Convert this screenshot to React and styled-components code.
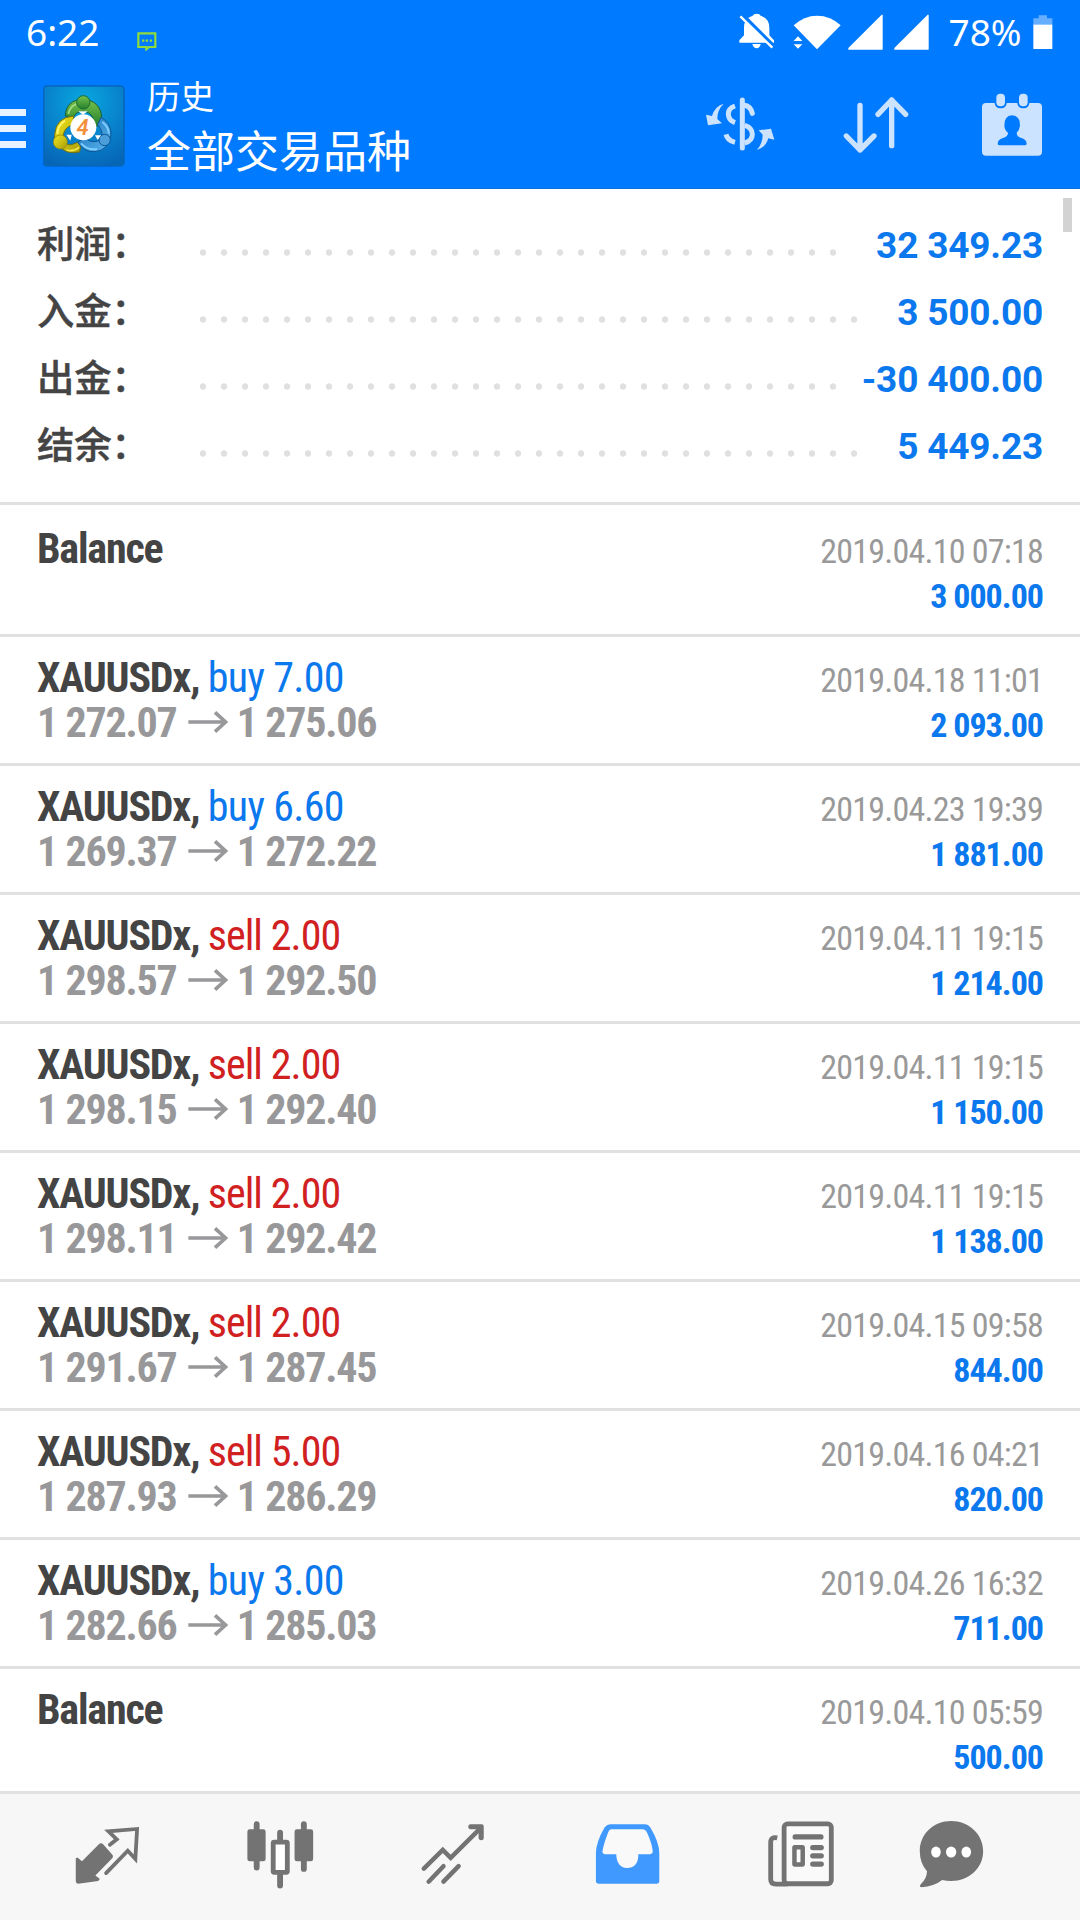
import React from 'react'
import styled, { createGlobalStyle } from 'styled-components'

const GlobalStyle = createGlobalStyle`
    body {
        margin: 0;
        background: #fff;
    }
    * {
        box-sizing: border-box;
    }
    svg {
        display: block;
        flex: none;
    }
`;

const Screen = styled.div`
    width: 1080px;
    height: 1920px;
    display: flex;
    flex-direction: column;
    overflow: hidden;
    background: #fff;
    font-family: Roboto, "Noto Sans CJK SC", sans-serif;
    color: #444;
`;

const Header = styled.header`
    height: 189px;
    flex: none;
    background: #007aff;
    border-bottom: 1px solid #0a6edc;
    color: #fff;
`;

const StatusBar = styled.div`
    height: 66px;
    display: flex;
    align-items: center;
    padding: 0 27px 2px 26px;
    font-family: "Noto Sans", sans-serif;
    font-size: 37px;
    line-height: 50px;
`;

const Clock = styled.span`
    width: 111px;
`;

const StatusIcons = styled.div`
    margin-left: auto;
    display: flex;
    align-items: center;
`;

const StatusIcon = styled.svg`
    height: 38px;
    width: ${props => props.$w}px;
    margin-right: ${props => props.$gap || 0}px;
`;

const Battery = styled.span`
    width: 84.5px;
    white-space: nowrap;
`;

const AppBar = styled.div`
    height: 122px;
    display: flex;
    align-items: center;
    padding-right: 33px;
`;

const MenuButton = styled.div`
    width: 26px;
    margin-right: 17px;
    padding-top: 2px;
    display: flex;
    flex-direction: column;
    gap: 9px;
`;

const MenuLine = styled.i`
    height: 7px;
    background: #e6f2ff;
`;

const Titles = styled.div`
    margin: -5px 0 0 22px;
    font-family: "Noto Sans CJK SC", sans-serif;
    font-weight: 400;
`;

const Title = styled.div`
    font-size: 33.5px;
    line-height: 49px;
`;

const Subtitle = styled.div`
    font-size: 44px;
    line-height: 60px;
`;

const Actions = styled.div`
    margin: -6px 0 0 auto;
    display: flex;
    gap: 66px;
    color: #cce3ff;
`;

const Content = styled.main`
    position: relative;
    flex: 1;
    overflow: hidden;
`;

const ScrollThumb = styled.div`
    position: absolute;
    top: 9px;
    right: 8px;
    width: 9px;
    height: 34px;
    background: #d3d3d3;
`;

const Summary = styled.div`
    height: 313px;
    padding: 21px 37px 0;
`;

const SummaryRow = styled.div`
    height: 67px;
    display: flex;
    align-items: center;
`;

const SummaryLabel = styled.span`
    width: 163px;
    padding-bottom: 3px;
    font-family: "Noto Sans CJK SC", sans-serif;
    font-size: 37.3px;
    font-weight: 500;
    line-height: 62px;
    -webkit-text-stroke: 0.45px #444;
`;

const Dots = styled.span`
    flex: 1;
    height: 7px;
    margin: 18px 25px 0 0;
    background: radial-gradient(circle at 3px 3.5px, #e0e0e0 2.8px, transparent 3.6px) 0 0 / 21px 7px;
`;

const SummaryValue = styled.span`
    font-size: 37px;
    font-weight: 700;
    line-height: 67px;
    letter-spacing: -0.18px;
    padding-top: 3px;
    color: #0b78ee;
`;

const Deal = styled.div`
    height: ${props => props.$first ? 132 : 129}px;
    border-top: 3px solid #e1e1e1;
    padding: ${props => props.$first ? 21 : 18}px 37px 0;
    display: flex;
    justify-content: space-between;
    font-family: "Roboto Condensed", Roboto, sans-serif;
    font-stretch: 75%;
`;

const DealInfo = styled.div`
    font-size: 42px;
    line-height: 45px;
    letter-spacing: -1.2px;
    white-space: nowrap;
`;

const Symbol = styled.div`
    font-weight: 700;
`;

const Side = styled.span`
    font-weight: 400;
    letter-spacing: ${props => props.$side === 'buy' ? -0.65 : -0.95}px;
    color: ${props => props.$side === 'buy' ? '#0b78ee' : '#d0201f'};
`;

const Prices = styled.div`
    display: flex;
    align-items: center;
    font-weight: 700;
    color: #98989a;
`;

const PriceArrow = styled.svg`
    width: 40px;
    height: 22px;
    margin: -1px 9px 0 11px;
`;

const DealResult = styled.div`
    text-align: right;
    font-size: 34px;
    line-height: 45px;
    padding: 3px 0 0 0;
    white-space: nowrap;
`;

const DealTime = styled.div`
    letter-spacing: -0.77px;
    color: #999;
`;

const Profit = styled.div`
    font-weight: 700;
    letter-spacing: -1px;
    color: #0b78ee;
`;

const TabBar = styled.nav`
    height: 129px;
    flex: none;
    display: flex;
    align-items: center;
    padding: 0 0 5px 20.75px;
    border-top: 3px solid #e1e1e1;
    background: #f7f7f7;
`;

const Tab = styled.div`
    width: ${props => props.$narrow ? 125 : 173.5}px;
    display: flex;
    justify-content: center;
    color: ${props => props.$active ? '#4099ff' : '#737373'};
`;

const totals = [
    { label: '利润：', value: '32 349.23' },
    { label: '入金：', value: '3 500.00' },
    { label: '出金：', value: '-30 400.00' },
    { label: '结余：', value: '5 449.23' },
];

const deals = [
    { time: '2019.04.10 07:18', profit: '3 000.00' },
    { side: 'buy', volume: '7.00', open: '1 272.07', close: '1 275.06', time: '2019.04.18 11:01', profit: '2 093.00' },
    { side: 'buy', volume: '6.60', open: '1 269.37', close: '1 272.22', time: '2019.04.23 19:39', profit: '1 881.00' },
    { side: 'sell', volume: '2.00', open: '1 298.57', close: '1 292.50', time: '2019.04.11 19:15', profit: '1 214.00' },
    { side: 'sell', volume: '2.00', open: '1 298.15', close: '1 292.40', time: '2019.04.11 19:15', profit: '1 150.00' },
    { side: 'sell', volume: '2.00', open: '1 298.11', close: '1 292.42', time: '2019.04.11 19:15', profit: '1 138.00' },
    { side: 'sell', volume: '2.00', open: '1 291.67', close: '1 287.45', time: '2019.04.15 09:58', profit: '844.00' },
    { side: 'sell', volume: '5.00', open: '1 287.93', close: '1 286.29', time: '2019.04.16 04:21', profit: '820.00' },
    { side: 'buy', volume: '3.00', open: '1 282.66', close: '1 285.03', time: '2019.04.26 16:32', profit: '711.00' },
    { time: '2019.04.10 05:59', profit: '500.00' },
];

const MessageSvg = styled.svg`
    width: 20px;
    height: 19px;
    margin-top: 18px;
`;

const MessageIcon = () => (
    <MessageSvg viewBox="0 0 60 57" fill="none" stroke="#8fdc3c" strokeWidth="6.5">
        <path d="M4 4H55V45H36L28 52V45H4Z" />
        <path d="M15 26h7M26 26h7M38 26h7" strokeWidth="7" />
    </MessageSvg>
)

const BellOffIcon = () => (
    <StatusIcon $w={36} $gap={18} viewBox="175 36 108 114" fill="#fff">
        <path d="M176 125V118L190 103V80Q190 52 216 44Q218 38 228 38Q238 38 240 44Q266 52 266 80V103L280 118V125Z" />
        <path d="M215 129h25q-3 13-12 13t-13-13z" />
        <path d="M180 38L282 140" stroke="#007aff" strokeWidth="14" />
        <path d="M179 46L275 140" stroke="#fff" strokeWidth="7" />
    </StatusIcon>
)

const WifiIcon = () => (
    <StatusIcon $w={48} $gap={7} viewBox="337 36 144 114" fill="#fff">
        <path d="M339 73Q370 44 409 44Q450 44 480 73L409 145Z" />
        <path d="M335 118L352 97L370 118V130L352 152L335 130Z" fill="#007aff" />
        <path d="M339 120L352 106L365 120ZM339 130H365L352 143Z" />
    </StatusIcon>
)

const SignalIcon = ({ gap }) => (
    <StatusIcon $w={35} $gap={gap} viewBox="501 36 105 114" fill="#fff">
        <path d="M502 146V141L602 41H605V146Z" />
    </StatusIcon>
)

const BatteryIcon = () => (
    <StatusIcon $w={20} viewBox="1058 36 60 114">
        <path d="M1059 72V52H1075V43H1100V52H1116V72Z" fill="#66aeff" />
        <path d="M1059 71H1116V144H1059Z" fill="#fff" />
    </StatusIcon>
)

const LogoSvg = styled.svg`
    width: 82px;
    height: 82px;
    margin-top: -3px;
`;

const Logo = () => (
    <LogoSvg viewBox="130 253 246 246">
        <defs>
            <radialGradient id="sky" cx="0.5" cy="0.2" r="0.85">
                <stop offset="0" stopColor="#08a8e0" />
                <stop offset="0.6" stopColor="#087fca" />
                <stop offset="1" stopColor="#0666b6" />
            </radialGradient>
            <linearGradient id="green" x1="0" y1="0" x2="0" y2="1">
                <stop offset="0" stopColor="#78c24c" />
                <stop offset="1" stopColor="#23802c" />
            </linearGradient>
            <linearGradient id="yellow" x1="0" y1="0" x2="1" y2="1">
                <stop offset="0" stopColor="#f1e51b" />
                <stop offset="1" stopColor="#a89c0c" />
            </linearGradient>
            <linearGradient id="blue" x1="0" y1="0" x2="1" y2="1">
                <stop offset="0" stopColor="#1670b5" />
                <stop offset="1" stopColor="#5cb6f0" />
            </linearGradient>
        </defs>
        <rect x="132" y="256" width="241" height="240" rx="10" fill="url(#sky)" stroke="#0766bd" strokeWidth="5" />
        <path d="M197 346C197 315 218 296 250 296C284 296 306 320 306 352L296 376H272L280 352Q270 332 250 332Q230 332 222 348Z" fill="url(#green)" stroke="#1b5f35" strokeWidth="3" />
        <path d="M206 340Q210 318 230 310" fill="none" stroke="#a8dc86" strokeWidth="5" />
        <circle cx="251" cy="305" r="20" fill="url(#green)" stroke="#1b6a35" strokeWidth="3" />
        <path d="M222 346Q168 350 165 402Q164 422 176 434Q198 463 240 454L246 420L216 432Q196 436 190 412Q190 380 220 372Z" fill="url(#yellow)" stroke="#6f700f" strokeWidth="3" />
        <path d="M196 360Q174 374 173 400" fill="none" stroke="#fff56a" strokeWidth="6" />
        <path d="M200 448Q222 454 238 440" fill="none" stroke="#f3e84a" strokeWidth="5" />
        <circle cx="182" cy="424" r="21" fill="url(#yellow)" stroke="#8a850f" strokeWidth="2" />
        <path d="M304 350Q334 366 334 402Q326 450 286 453Q252 455 234 424L256 412Q280 432 304 416Q314 396 294 372Z" fill="url(#blue)" stroke="#0a5597" strokeWidth="3" />
        <path d="M244 428Q264 450 292 445M308 364Q326 378 328 398" fill="none" stroke="#7dccff" strokeWidth="6" />
        <circle cx="315" cy="418" r="17" fill="#4b9ed8" stroke="#0a5597" strokeWidth="3" />
        <path d="M200 402h16l-4 18zM286 404h18l-10 14zM236 332l14 10 14-10z" fill="#fff" />
        <circle cx="251" cy="380" r="39" fill="#fff" />
        <text x="249" y="404" textAnchor="middle" fontFamily="Roboto, sans-serif" fontSize="66" fontStyle="italic" fontWeight="600" fill="#f2903c">4</text>
    </LogoSvg>
)

const CurrencyIcon = () => (
    <svg width="70" height="70" viewBox="75 268 210 210" fill="none" stroke="currentColor">
        <path d="M187 301V445" strokeWidth="15" strokeLinecap="round" />
        <path d="M165 319Q144 326 145 344Q146 362 165 369" strokeWidth="15" />
        <path d="M194 317Q212 320 217 341" strokeWidth="15" strokeLinecap="round" />
        <path d="M194 377Q217 384 217 404Q217 424 194 430" strokeWidth="15" />
        <path d="M138 404Q142 422 165 428" strokeWidth="15" strokeLinecap="butt" />
        <path d="M131 312Q104 320 96 349L78 345L84 377L126 371L112 358Q112 330 131 312Z" fill="currentColor" stroke="none" />
        <path d="M230 451Q257 444 265 416L283 420L273 387L236 392L248 405Q248 432 230 451Z" fill="currentColor" stroke="none" />
    </svg>
)

const SortIcon = () => (
    <svg width="70" height="70" viewBox="483 268 210 210" fill="none" stroke="currentColor" strokeWidth="16" strokeLinecap="round" strokeLinejoin="round">
        <path d="M540 317V451M499 409L540 451L582 409" />
        <path d="M635 438V301M594 344L635 301L677 344" />
    </svg>
)

const CalendarIcon = () => (
    <svg width="70" height="70" viewBox="891 268 210 210" fill="currentColor">
        <rect x="906" y="310" width="180" height="158" rx="12" />
        <rect x="944" y="278" width="36" height="48" rx="16" fill="#007aff" />
        <rect x="1012" y="278" width="36" height="48" rx="16" fill="#007aff" />
        <rect x="949" y="282" width="26" height="38" rx="12" />
        <rect x="1017" y="282" width="26" height="38" rx="12" />
        <path d="M996 347Q1020 348 1020 378Q1018 392 1010 399Q1010 410 1022 414Q1040 418 1040 432Q1040 437 1034 437H959Q953 437 953 432Q953 418 971 414Q984 410 984 399Q974 392 973 378Q973 348 996 347Z" fill="#007aff" />
    </svg>
)

const TabIcon = ({ x, children }) => (
    <svg width="70.25" height="70.25" viewBox={`${x} 120 204 204`} fill="currentColor">{children}</svg>
)

const QuotesIcon = () => (
    <TabIcon x={210}>
        <path d="M288 193Q295 188 301 194L326 222Q332 228 326 235L278 284L291 294L286 300L228 308Q221 308 221 301V234L226 232L239 243Z" />
        <path d="M320 195L340 179L316 156L399 149L394 236L372 212L309 277" fill="none" stroke="currentColor" strokeWidth="11" strokeLinecap="round" />
    </TabIcon>
)

const ChartIcon = () => (
    <TabIcon x={714}>
        <rect x="718" y="150" width="53" height="93" rx="7" />
        <rect x="855" y="150" width="54" height="93" rx="7" />
        <path d="M745 135V261M882 135V265M813 160V185M813 280V313" fill="none" stroke="currentColor" strokeWidth="17" strokeLinecap="round" />
        <rect x="793" y="187" width="41" height="88" rx="3" fill="#fff" stroke="currentColor" strokeWidth="14" />
    </TabIcon>
)

const TradeIcon = () => (
    <TabIcon x={1218}>
        <path d="M1232 264L1287 210L1310 233L1396 147M1246 302L1289 257M1289 302L1333 257" fill="none" stroke="currentColor" strokeWidth="13" strokeLinecap="round" />
        <path d="M1368 135H1400Q1406 135 1406 141V175Q1406 182 1399 182Q1391 182 1391 174V150H1368Q1361 150 1361 142Q1361 135 1368 135Z" />
    </TabIcon>
)

const HistoryIcon = () => (
    <TabIcon x={153.5}>
        <path d="M206 135H303Q315 135 320 145Q346 188 346 220V300Q346 308 338 308H171Q162 308 162 300V220Q162 188 187 145Q194 135 206 135Z" />
        <path d="M206 150H297Q307 151 311 161Q325 192 327 214Q327 222 319 222H285V228Q283 262 252 262Q222 260 221 222H188Q180 222 181 214Q185 190 198 158Q201 151 206 150Z" fill="#f9f9f9" />
    </TabIcon>
)

const NewsIcon = () => (
    <TabIcon x={657.4}>
        <rect x="710" y="134" width="137" height="174" rx="10" fill="#fafafa" stroke="currentColor" strokeWidth="14" />
        <path d="M690 175Q671 171 671 188V295Q671 309 686 309H720" fill="none" stroke="currentColor" strokeWidth="14" />
        <path d="M742 172H817M793 203H818M793 227H818M793 251H818" fill="none" stroke="currentColor" strokeWidth="15" strokeLinecap="round" />
        <rect x="740" y="202" width="24" height="50" rx="1" fill="#fff" stroke="currentColor" strokeWidth="13" strokeLinejoin="round" />
    </TabIcon>
)

const ChatIcon = () => (
    <TabIcon x={1091}>
        <path d="M1193 126C1244 126 1286 164 1286 213C1286 263 1245 300 1193 300Q1179 300 1167 297Q1145 315 1106 318Q1099 316 1106 308Q1122 294 1123 272Q1102 248 1102 213C1102 164 1142 126 1193 126Z" />
        <g fill="#fff">
            <ellipse cx="1149" cy="216" rx="14" ry="16" />
            <ellipse cx="1193" cy="216" rx="15" ry="16" />
            <ellipse cx="1237" cy="216" rx="14" ry="16" />
        </g>
    </TabIcon>
)

const DealRow = ({ deal, first }) => (
    <Deal $first={first}>
        <DealInfo>
            {deal.side ?
                <>
                    <Symbol>
                        XAUUSDx, <Side $side={deal.side}>{deal.side} {deal.volume}</Side>
                    </Symbol>
                    <Prices>
                        {deal.open}
                        <PriceArrow viewBox="0 0 120 66" fill="none" stroke="currentColor" strokeWidth="11">
                            <path d="M1 33H114M81 4L113 33L81 62" />
                        </PriceArrow>
                        {deal.close}
                    </Prices>
                </>
            :
                <Symbol>Balance</Symbol>
            }
        </DealInfo>
        <DealResult>
            <DealTime>{deal.time}</DealTime>
            <Profit>{deal.profit}</Profit>
        </DealResult>
    </Deal>
)

const App = () => (
    <Screen>
        <GlobalStyle />
        <Header>
            <StatusBar>
                <Clock>6:22</Clock>
                <MessageIcon />
                <StatusIcons>
                    <BellOffIcon />
                    <WifiIcon />
                    <SignalIcon gap={11} />
                    <SignalIcon gap={20} />
                    <Battery>78%</Battery>
                    <BatteryIcon />
                </StatusIcons>
            </StatusBar>
            <AppBar>
                <MenuButton>
                    <MenuLine />
                    <MenuLine />
                    <MenuLine />
                </MenuButton>
                <Logo />
                <Titles>
                    <Title>历史</Title>
                    <Subtitle>全部交易品种</Subtitle>
                </Titles>
                <Actions>
                    <CurrencyIcon />
                    <SortIcon />
                    <CalendarIcon />
                </Actions>
            </AppBar>
        </Header>
        <Content>
            <Summary>
                {totals.map(item => (
                    <SummaryRow key={item.label}>
                        <SummaryLabel>{item.label}</SummaryLabel>
                        <Dots />
                        <SummaryValue>{item.value}</SummaryValue>
                    </SummaryRow>
                ))}
            </Summary>
            {deals.map((deal, i) => (
                <DealRow key={i} deal={deal} first={i === 0} />
            ))}
            <ScrollThumb />
        </Content>
        <TabBar>
            <Tab><QuotesIcon /></Tab>
            <Tab><ChartIcon /></Tab>
            <Tab><TradeIcon /></Tab>
            <Tab $active><HistoryIcon /></Tab>
            <Tab><NewsIcon /></Tab>
            <Tab $narrow><ChatIcon /></Tab>
        </TabBar>
    </Screen>
)

export default App
